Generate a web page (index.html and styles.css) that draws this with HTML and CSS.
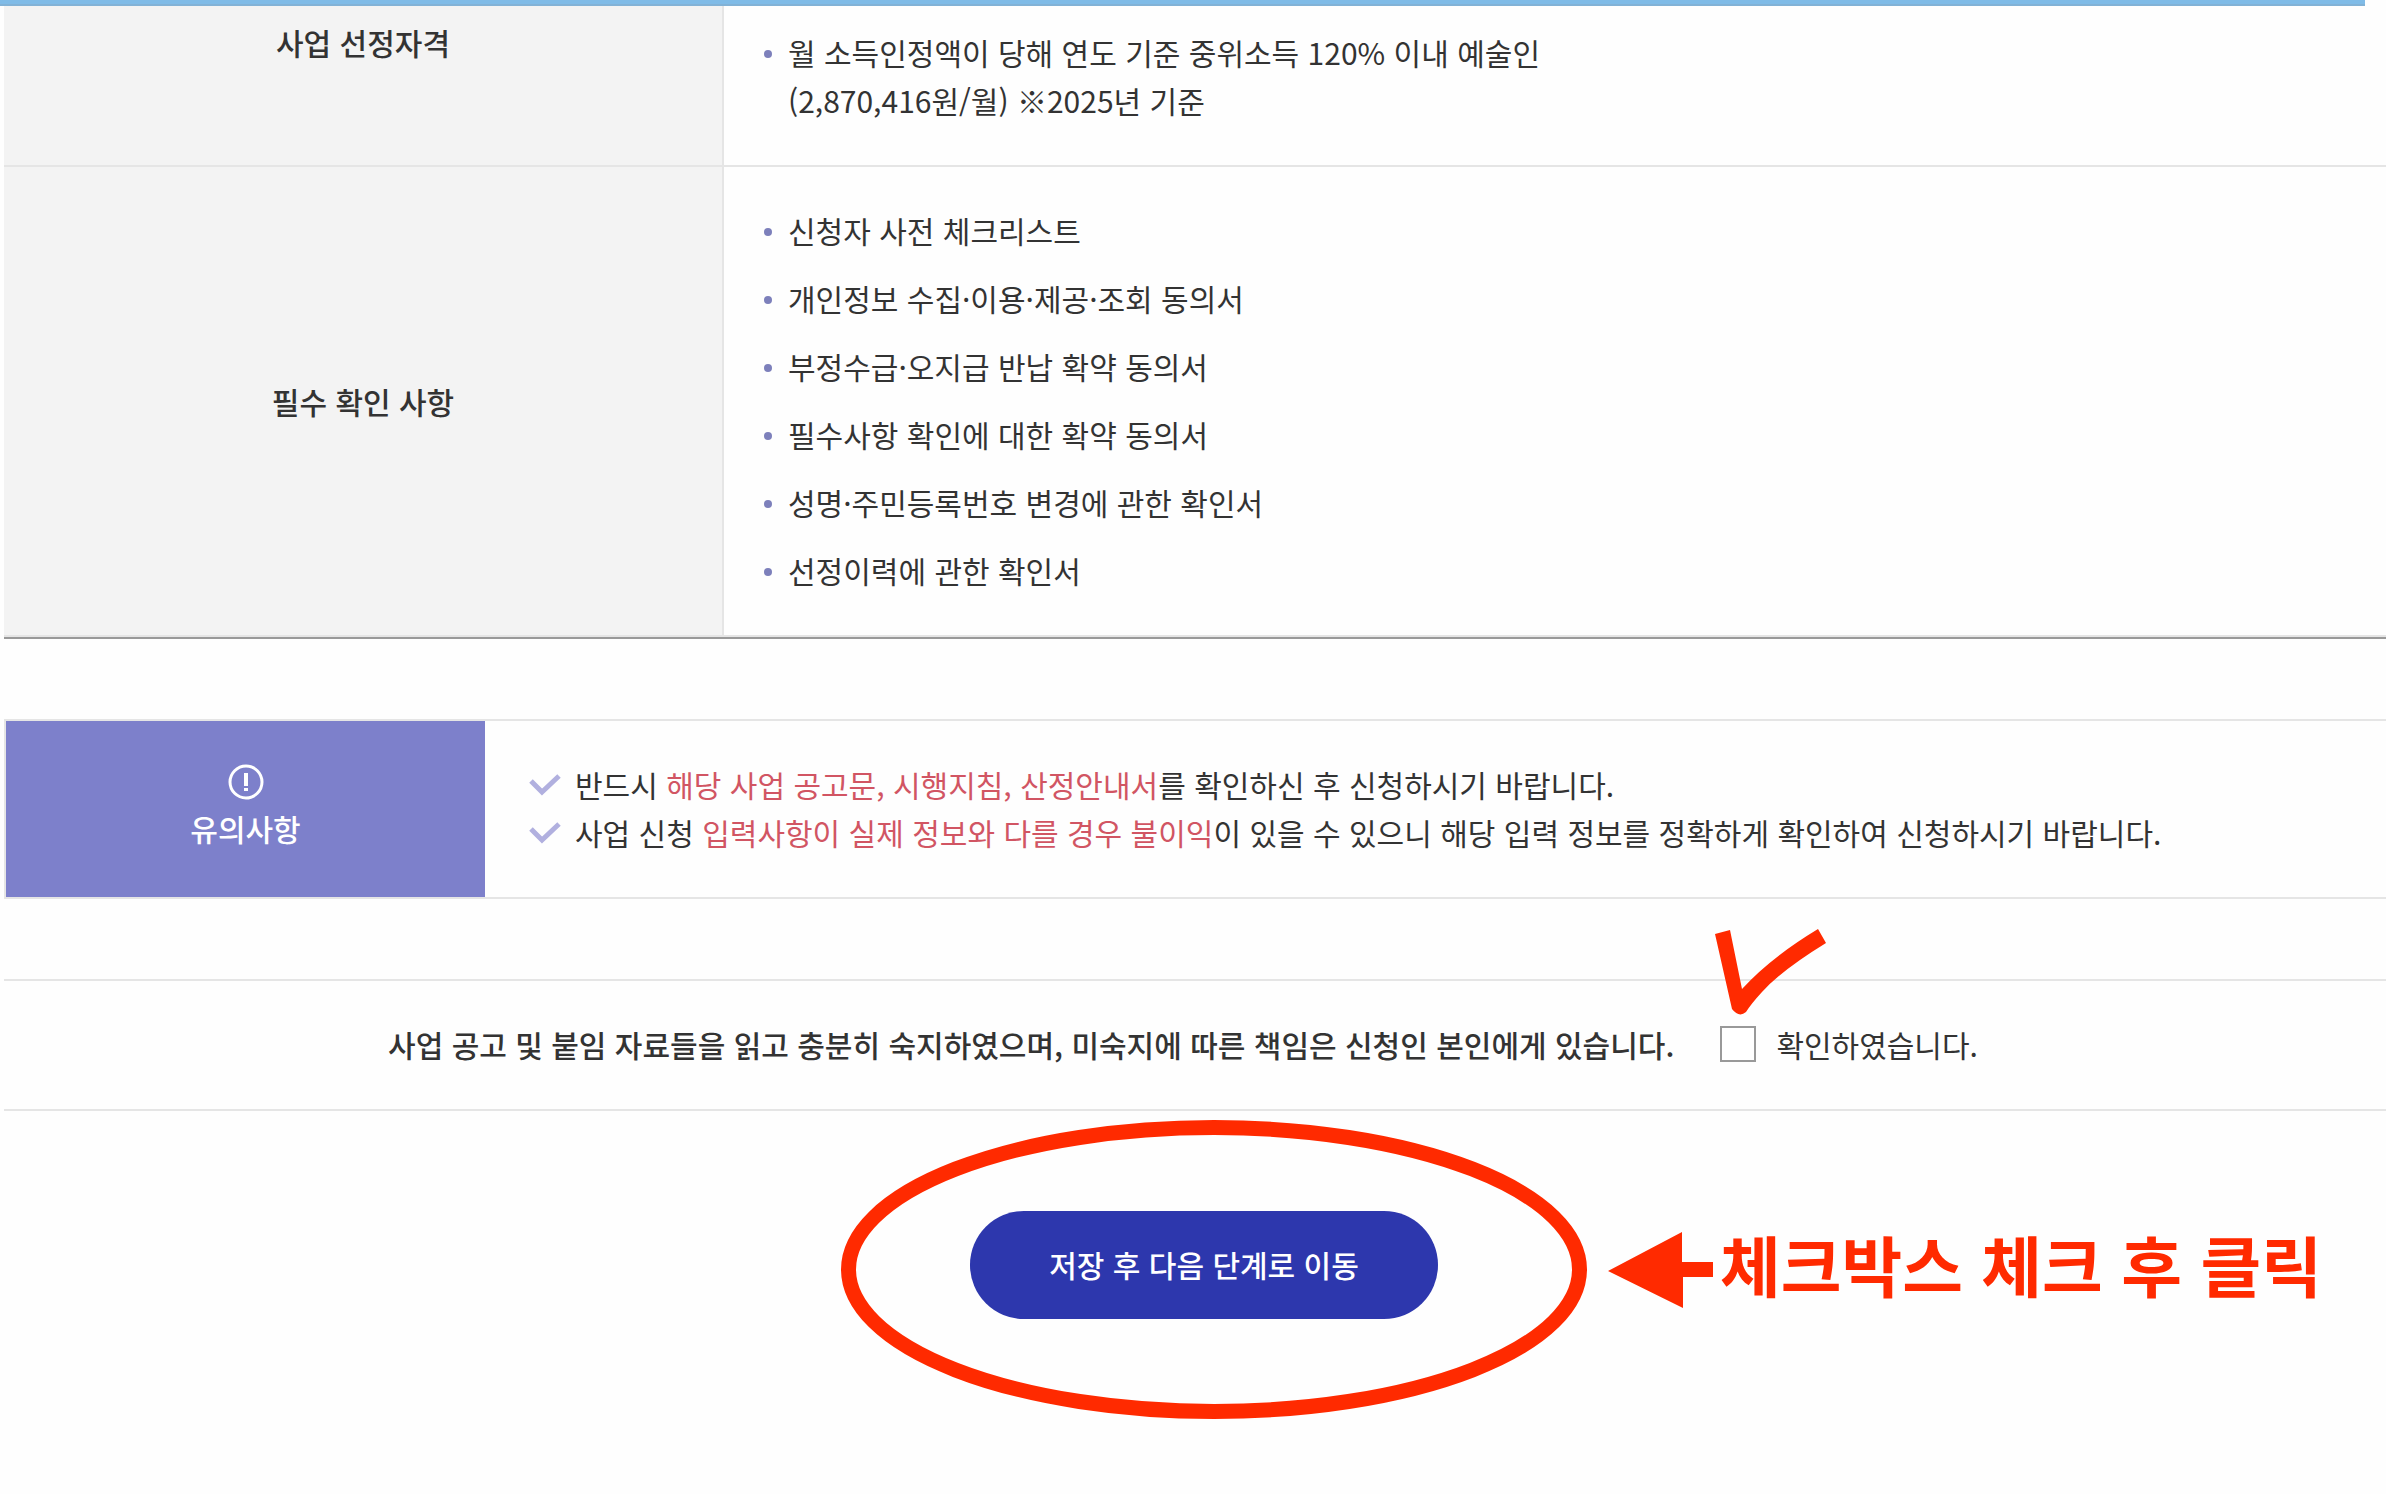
FILE: index.html
```
<!DOCTYPE html>
<html lang="ko">
<head>
    <meta charset="utf-8">
    <title>사업 신청</title>
    <link rel="stylesheet" href="styles.css">
</head>
<body>
    <div class="top-bar"></div>

    <form class="container">
        <table class="info-table">
            <tr>
                <th class="first-row" scope="row">사업 선정자격</th>
                <td class="first-row">
                    <ul class="dot-list">
                        <li>월 소득인정액이 당해 연도 기준 중위소득 120% 이내 예술인<br>(2,870,416원/월) ※2025년 기준</li>
                    </ul>
                </td>
            </tr>
            <tr>
                <th scope="row">필수 확인 사항</th>
                <td>
                    <ul class="dot-list">
                        <li>신청자 사전 체크리스트</li>
                        <li>개인정보 수집·이용·제공·조회 동의서</li>
                        <li>부정수급·오지급 반납 확약 동의서</li>
                        <li>필수사항 확인에 대한 확약 동의서</li>
                        <li>성명·주민등록번호 변경에 관한 확인서</li>
                        <li>선정이력에 관한 확인서</li>
                    </ul>
                </td>
            </tr>
        </table>

        <div class="notice">
            <div class="notice-title">
                <svg width="36" height="36" viewBox="0 0 36 36">
                    <circle cx="18" cy="18" r="16" fill="none" stroke="#fff" stroke-width="3"/>
                    <path d="M18 9v13M18 24v3" stroke="#fff" stroke-width="4"/>
                </svg>
                <span>유의사항</span>
            </div>
            <ul class="check-list">
                <li>
                    <svg class="tick" width="32" height="24" viewBox="0 0 32 24"><path d="M2 9l11 11L30 4" fill="none" stroke="#b1b0df" stroke-width="5"/></svg>
                    <span>반드시 <em>해당 사업 공고문, 시행지침, 산정안내서</em>를 확인하신 후 신청하시기 바랍니다.</span>
                </li>
                <li>
                    <svg class="tick" width="32" height="24" viewBox="0 0 32 24"><path d="M2 9l11 11L30 4" fill="none" stroke="#b1b0df" stroke-width="5"/></svg>
                    <span>사업 신청 <em>입력사항이 실제 정보와 다를 경우 불이익</em>이 있을 수 있으니 해당 입력 정보를 정확하게 확인하여 신청하시기 바랍니다.</span>
                </li>
            </ul>
        </div>

        <div class="confirm">
            <strong>사업 공고 및 붙임 자료들을 읽고 충분히 숙지하였으며, 미숙지에 따른 책임은 신청인 본인에게 있습니다.</strong>
            <div class="agree">
                <input type="checkbox" id="agree" name="agree">
                <label for="agree">확인하였습니다.</label>
                <svg class="mark-check" width="120" height="92" viewBox="0 0 120 92">
                    <path d="M3 8L18 4L30 63Q58 32 106 3L114 17Q70 44 50 66Q39 78 34 86Q27 92 20 83Z" fill="#ff2a00"/>
                </svg>
            </div>
        </div>

        <div class="actions">
            <div class="action">
                <button type="submit" class="next-btn">저장 후 다음 단계로 이동</button>
                <svg class="mark-circle" width="748" height="302" viewBox="0 0 748 302">
                    <ellipse cx="374" cy="150.5" rx="365.5" ry="142" fill="none" stroke="#ff2a00" stroke-width="15"/>
                </svg>
                <div class="mark-note">
                    <svg width="106" height="76" viewBox="0 0 106 76">
                        <path d="M0 39L74 0V30H105V45H75V76Z" fill="#ff2a00"/>
                    </svg>
                    <span>체크박스 체크 후 클릭</span>
                </div>
            </div>
        </div>
    </form>
</body>
</html>
```
FILE: styles.css
```
* {
    box-sizing: border-box;
}
body {
    margin: 0;
    font-family: "Noto Sans CJK KR", sans-serif;
    font-size: 30px;
    line-height: 48px;
    color: #333;
    background-color: #fefefe;
    overflow-x: hidden;
}
ul {
    margin: 0;
    padding: 0;
    list-style: none;
}
svg {
    display: block;
    flex-shrink: 0;
}
.top-bar {
    height: 6px;
    margin-right: 21px;
    background-color: #7fbbe7;
    border-bottom: 2px solid #82b2d6;
}
.container {
    padding-left: 4px;
}

/* info table */
.info-table {
    width: 100%;
    border-collapse: separate;
    border-spacing: 0;
    border-bottom: 2px solid #999;
}
.info-table th {
    width: 720px;
    background-color: #f3f3f3;
    border-right: 2px solid #e5e5e5;
    border-bottom: 2px solid #e5e5e5;
    font-weight: 500;
}
.info-table td {
    padding: 39px 40px 41px;
    border-bottom: 2px solid #e5e5e5;
}
.info-table .first-row {
    padding-top: 22px;
    vertical-align: top;
}
.info-table th.first-row {
    padding-top: 12px;
}
.dot-list li {
    position: relative;
    padding-left: 24px;
}
.dot-list li + li {
    margin-top: 20px;
}
.dot-list li::before {
    content: "";
    position: absolute;
    left: 0;
    top: 22px;
    width: 8px;
    height: 8px;
    border-radius: 50%;
    background-color: #7d80bb;
}

/* notice */
.notice {
    display: flex;
    margin-top: 80px;
    border: 2px solid #e5e5e5;
    border-right: none;
}
.notice-title {
    display: flex;
    flex-direction: column;
    align-items: center;
    justify-content: center;
    gap: 4px;
    width: 479px;
    padding-bottom: 2px;
    background-color: #7d80cb;
    color: #fff;
    font-weight: 500;
}
.check-list {
    padding: 39px 44px 41px;
}
.check-list li {
    display: flex;
    align-items: center;
    gap: 14px;
}
.check-list em {
    font-style: normal;
    color: #d15563;
}

/* confirm */
.confirm {
    display: flex;
    align-items: center;
    justify-content: center;
    gap: 46px;
    margin-top: 80px;
    padding: 39px 24px 41px 0;
    border-top: 2px solid #e5e5e5;
    border-bottom: 2px solid #e5e5e5;
}
.confirm strong {
    font-weight: 500;
}
.agree {
    position: relative;
    display: flex;
    align-items: center;
    gap: 20px;
}
.agree input {
    appearance: none;
    width: 36px;
    height: 36px;
    margin: 0;
    border: 2px solid #999;
    background-color: #fff;
}
.mark-check {
    position: absolute;
    left: -8px;
    bottom: 50px;
}

/* button */
.actions {
    display: flex;
    justify-content: center;
    padding: 100px 0 174px 18px;
}
.action {
    position: relative;
}
.next-btn {
    display: block;
    width: 468px;
    height: 108px;
    padding: 0 0 2px;
    border: none;
    border-radius: 54px;
    background-color: #2d37ad;
    color: #fff;
    font-family: inherit;
    font-size: 30px;
    font-weight: 500;
    cursor: pointer;
}
.mark-circle {
    position: absolute;
    left: -130px;
    top: -92px;
    pointer-events: none;
}
.mark-note {
    position: absolute;
    left: 638px;
    top: 21px;
    display: flex;
    align-items: flex-start;
    gap: 6px;
    color: #ff2a00;
    font-size: 66px;
    line-height: 62px;
    font-weight: 700;
    white-space: nowrap;
}
```
